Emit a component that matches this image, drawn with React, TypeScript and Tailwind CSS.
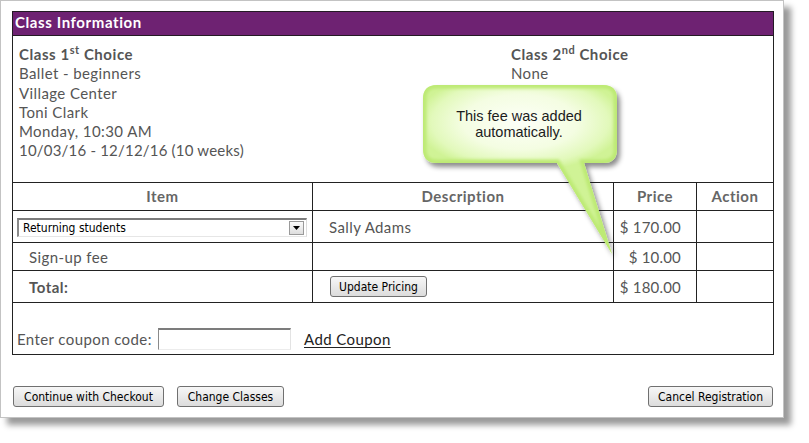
import React from "react";

const Btn = ({ children, w }: { children: React.ReactNode; w: string }) => (
  <div
    className={`${w} h-[21px] flex items-center justify-center border border-[#707070] rounded-[3px] bg-linear-to-b from-[#f7f7f7] to-[#dcdcdc] text-[12px] leading-none text-black font-['DejaVu_Sans_Condensed',sans-serif]`}
  >
    {children}
  </div>
);

export default function App() {
  return (
    <div className="w-[809px] h-[443px] bg-white font-['Lato',sans-serif]">
      <div className="relative w-[784px] h-[418px] border border-[#c3c3c3] bg-white pl-[11px] pt-[10px] shadow-[7px_7px_6px_rgba(0,0,0,0.4)]">
        {/* header */}
        <div className="w-[762px] h-[25px] border border-[#241a24] bg-[#6e2272] pl-[2px] text-white font-bold text-[15px] leading-[21px] tracking-[0.6px]">
          Class Information
        </div>
        <div className="w-[762px] border-x border-b border-[#222]">
          {/* class info */}
          <div className="h-[146px] flex pl-[6px] pt-[9px] text-[15px] leading-[19.25px] text-[#555] tracking-[0.4px]">
            <div className="w-[492px]">
              <div className="font-bold tracking-[0.55px]">
                Class 1<sup className="text-[11px] -top-[6px]">st</sup> Choice
              </div>
              <div>Ballet - beginners</div>
              <div>Village Center</div>
              <div>Toni Clark</div>
              <div>Monday, 10:30 AM</div>
              <div className="tracking-[0.2px]">10/03/16 - 12/12/16 (10 weeks)</div>
            </div>
            <div>
              <div className="font-bold tracking-[0.55px]">
                Class 2<sup className="text-[11px] -top-[6px]">nd</sup> Choice
              </div>
              <div>None</div>
            </div>
          </div>
          {/* table */}
          <div className="border-t border-[#222] text-[15px] text-[#555] tracking-[0.4px]">
            <div className="grid grid-cols-[300px_301px_83px_76px] h-[28px] border-b border-[#222] font-bold text-[#666] tracking-[0.5px]">
              <div className="border-r border-[#222] flex items-center justify-center">Item</div>
              <div className="border-r border-[#222] flex items-center justify-center">Description</div>
              <div className="border-r border-[#222] flex items-center justify-center">Price</div>
              <div className="flex items-center justify-center">Action</div>
            </div>
            <div className="grid grid-cols-[300px_301px_83px_76px] h-[32px] border-b border-[#222]">
              <div className="border-r border-[#222] flex items-center pl-[4px]">
                <div className="w-[290px] h-[19px] mt-[1px] border-t-2 border-l-2 border-t-[#7c7c7c] border-l-[#8a8a8a] border-b border-r border-b-[#e6e6e6] border-r-[#dcdcdc] bg-white flex items-center justify-between pl-[4px] pr-[2px] tracking-normal">
                  <span className="text-[12px] leading-none text-black font-['DejaVu_Sans_Condensed',sans-serif]">
                    Returning students
                  </span>
                  <div className="w-[15px] h-[14px] border border-[#9a9a9a] bg-linear-to-b from-[#fbfbfb] to-[#dedede] flex items-center justify-center">
                    <svg width="7" height="4" viewBox="0 0 7 4">
                      <path d="M0 0H7L3.5 4Z" fill="#000" />
                    </svg>
                  </div>
                </div>
              </div>
              <div className="border-r border-[#222] flex items-center pl-[16px] pt-[2px]">Sally Adams</div>
              <div className="border-r border-[#222] flex items-center justify-end pr-[15px] pt-[2px] tracking-[0.2px]">$ 170.00</div>
              <div />
            </div>
            <div className="grid grid-cols-[300px_301px_83px_76px] h-[28px] border-b border-[#222]">
              <div className="border-r border-[#222] flex items-center pl-[16px] pt-[1px]">Sign-up fee</div>
              <div className="border-r border-[#222]" />
              <div className="border-r border-[#222] flex items-center justify-end pr-[15px] pt-[1px] tracking-[0.2px]">$ 10.00</div>
              <div />
            </div>
            <div className="grid grid-cols-[300px_301px_83px_76px] h-[32px] border-b border-[#222]">
              <div className="border-r border-[#222] flex items-center pl-[16px] pt-[2px] font-bold tracking-[0.5px]">Total:</div>
              <div className="border-r border-[#222] flex items-center pl-[17px] tracking-normal">
                <Btn w="w-[97px]">Update Pricing</Btn>
              </div>
              <div className="border-r border-[#222] flex items-center justify-end pr-[15px] pt-[2px] tracking-[0.2px]">$ 180.00</div>
              <div />
            </div>
            <div className="h-[51px] flex items-end pb-[4px] pl-[4px]">
              <div className="h-[22px] flex items-center">
                <span className="w-[141px] pt-[1px]">Enter coupon code:</span>
                <div className="w-[133px] h-[22px] border-t-2 border-l border-t-[#7c7c7c] border-l-[#8a8a8a] border-b border-r border-b-[#ececec] border-r-[#e3e3e3] bg-white" />
                <span className="ml-[13px] pt-[1px] text-[#222] underline underline-offset-2">Add Coupon</span>
              </div>
            </div>
          </div>
        </div>
        {/* bottom buttons */}
        <div className="w-[762px] mt-[31px] flex justify-between px-[1px]">
          <div className="flex gap-[13px]">
            <Btn w="w-[151px]">Continue with Checkout</Btn>
            <Btn w="w-[107px]">Change Classes</Btn>
          </div>
          <Btn w="w-[125px]">Cancel Registration</Btn>
        </div>

        {/* callout */}
        <svg
          className="absolute left-[409px] top-[74px]"
          width="230"
          height="192"
          viewBox="410 75 230 192"
        >
          <defs>
            <radialGradient
              id="cg"
              gradientUnits="userSpaceOnUse"
              cx="520"
              cy="122"
              r="104"
              gradientTransform="translate(520 122) scale(1 0.48) translate(-520 -122)"
            >
              <stop offset="0" stopColor="#fdfff8" />
              <stop offset="0.55" stopColor="#f4fde2" />
              <stop offset="0.85" stopColor="#e2f9bb" />
              <stop offset="1" stopColor="#d0f396" />
            </radialGradient>
            <filter id="cs" x="-20%" y="-20%" width="150%" height="150%">
              <feDropShadow dx="3" dy="4" stdDeviation="2.5" floodColor="#000" floodOpacity="0.45" />
            </filter>
            <filter id="cb" x="-10%" y="-10%" width="120%" height="120%">
              <feGaussianBlur stdDeviation="1.8" />
            </filter>
            <clipPath id="cc">
              <path d="M437,85 H603 Q617,85 617,99 V149 Q617,163 603,163 H584 L612,254 L557,163 H437 Q423,163 423,149 V99 Q423,85 437,85 Z" />
            </clipPath>
          </defs>
          <path
            d="M437,85 H603 Q617,85 617,99 V149 Q617,163 603,163 H584 L612,254 L557,163 H437 Q423,163 423,149 V99 Q423,85 437,85 Z"
            fill="url(#cg)"
            filter="url(#cs)"
          />
          <g clipPath="url(#cc)">
            <path
              d="M437,85 H603 Q617,85 617,99 V149 Q617,163 603,163 H584 L612,254 L557,163 H437 Q423,163 423,149 V99 Q423,85 437,85 Z"
              fill="none"
              stroke="#bdea74"
              strokeWidth="7"
              filter="url(#cb)"
            />
          </g>
          <text
            x="519"
            y="120.5"
            textAnchor="middle"
            fontFamily="'Liberation Sans', Arial, sans-serif"
            fontSize="14.5"
            fill="#1c1c1c"
          >
            This fee was added
          </text>
          <text
            x="519"
            y="137"
            textAnchor="middle"
            fontFamily="'Liberation Sans', Arial, sans-serif"
            fontSize="14.5"
            fill="#1c1c1c"
          >
            automatically.
          </text>
        </svg>
      </div>
    </div>
  );
}
